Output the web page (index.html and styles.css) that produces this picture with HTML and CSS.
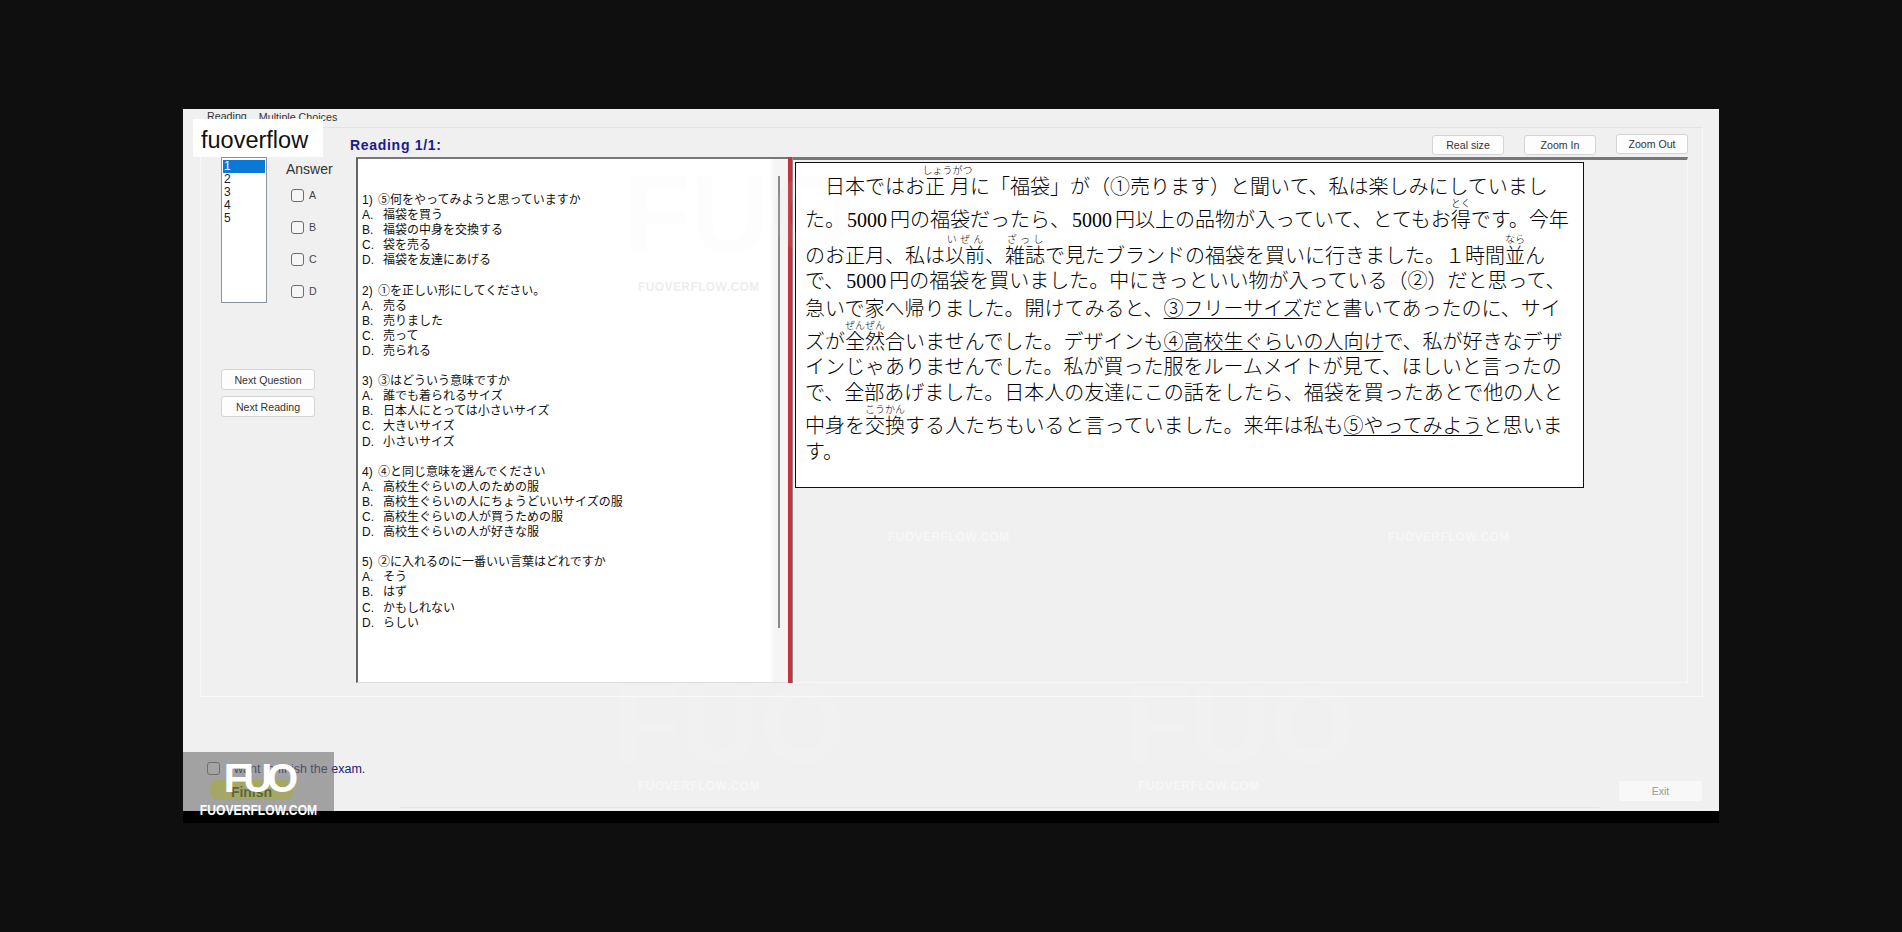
FILE: index.html
```html
<!DOCTYPE html>
<html lang="ja">
  <head>
    <meta charset="UTF-8" />
    <title>EOS Reading</title>
    <link rel="stylesheet" href="styles.css">
  </head>
  <body>
    <div class="stage">
      <div class="window">
        <!-- Tab strip -->
        <div class="tabs">
          <span class="tab">Reading</span>
          <span class="tab tab-low">Multiple Choices</span>
        </div>

        <div class="panel">
          <div class="toolbar">
            <div class="reading-title">Reading 1/1:</div>
            <div class="zoom-buttons">
              <button class="btn">Real size</button>
              <button class="btn">Zoom In</button>
              <button class="btn btn-raised">Zoom Out</button>
            </div>
          </div>

          <div class="content">
            <!-- Question list and answer boxes -->
            <div class="side">
              <div class="side-left">
                <ul class="question-list">
                  <li class="selected">1</li>
                  <li>2</li>
                  <li>3</li>
                  <li>4</li>
                  <li>5</li>
                </ul>
                <button class="btn btn-next">Next Question</button>
                <button class="btn btn-next">Next Reading</button>
              </div>
              <div class="answers">
                <div class="answers-title">Answer</div>
                <label class="answer"><input type="checkbox" />A</label>
                <label class="answer"><input type="checkbox" />B</label>
                <label class="answer"><input type="checkbox" />C</label>
                <label class="answer"><input type="checkbox" />D</label>
              </div>
            </div>

            <!-- Questions -->
            <div class="questions">
              <div class="q"><span class="num">1)</span>⑤何をやってみようと思っていますか</div>
              <div class="q"><span class="key">A.</span>福袋を買う</div>
              <div class="q"><span class="key">B.</span>福袋の中身を交換する</div>
              <div class="q"><span class="key">C.</span>袋を売る</div>
              <div class="q"><span class="key">D.</span>福袋を友達にあげる</div>
              <div class="q-gap"></div>
              <div class="q"><span class="num">2)</span>①を正しい形にしてください。</div>
              <div class="q"><span class="key">A.</span>売る</div>
              <div class="q"><span class="key">B.</span>売りました</div>
              <div class="q"><span class="key">C.</span>売って</div>
              <div class="q"><span class="key">D.</span>売られる</div>
              <div class="q-gap"></div>
              <div class="q"><span class="num">3)</span>③はどういう意味ですか</div>
              <div class="q"><span class="key">A.</span>誰でも着られるサイズ</div>
              <div class="q"><span class="key">B.</span>日本人にとっては小さいサイズ</div>
              <div class="q"><span class="key">C.</span>大きいサイズ</div>
              <div class="q"><span class="key">D.</span>小さいサイズ</div>
              <div class="q-gap"></div>
              <div class="q"><span class="num">4)</span>④と同じ意味を選んでください</div>
              <div class="q"><span class="key">A.</span>高校生ぐらいの人のための服</div>
              <div class="q"><span class="key">B.</span>高校生ぐらいの人にちょうどいいサイズの服</div>
              <div class="q"><span class="key">C.</span>高校生ぐらいの人が買うための服</div>
              <div class="q"><span class="key">D.</span>高校生ぐらいの人が好きな服</div>
              <div class="q-gap"></div>
              <div class="q"><span class="num">5)</span>②に入れるのに一番いい言葉はどれですか</div>
              <div class="q"><span class="key">A.</span>そう</div>
              <div class="q"><span class="key">B.</span>はず</div>
              <div class="q"><span class="key">C.</span>かもしれない</div>
              <div class="q"><span class="key">D.</span>らしい</div>
              <div class="scroll-line"></div>
            </div>

            <div class="splitter"></div>

            <!-- Reading passage -->
            <div class="reading-pane">
              <div class="passage">
                <div class="line">　日本ではお<ruby>正月<rt>しょうがつ</rt></ruby>に「福袋」が（①売ります）と聞いて、私は楽しみにしていまし</div>
                <div class="line">た。<span class="num-serif">5000</span>円の福袋だったら、<span class="num-serif">5000</span>円以上の品物が入っていて、とてもお<ruby>得<rt>とく</rt></ruby>です。今年</div>
                <div class="line">のお正月、私は<ruby>以前<rt>いぜん</rt></ruby>、<ruby>雑誌<rt>ざっし</rt></ruby>で見たブランドの福袋を買いに行きました。１時間<ruby>並<rt>なら</rt></ruby>ん</div>
                <div class="line">で、<span class="num-serif">5000</span>円の福袋を買いました。中にきっといい物が入っている（②）だと思って、</div>
                <div class="line">急いで家へ帰りました。開けてみると、<u>③フリーサイズ</u>だと書いてあったのに、サイ</div>
                <div class="line">ズが<ruby>全然<rt>ぜんぜん</rt></ruby>合いませんでした。デザインも<u>④高校生ぐらいの人向け</u>で、私が好きなデザ</div>
                <div class="line">インじゃありませんでした。私が買った服をルームメイトが見て、ほしいと言ったの</div>
                <div class="line">で、全部あげました。日本人の友達にこの話をしたら、福袋を買ったあとで他の人と</div>
                <div class="line">中身を<ruby>交換<rt>こうかん</rt></ruby>する人たちもいると言っていました。来年は私も<u>⑤やってみよう</u>と思いま</div>
                <div class="line">す。</div>
              </div>
            </div>
          </div>
        </div>

        <div class="footer">
          <div class="finish-area">
            <label class="finish-check"><input type="checkbox" />I want to finish the exam.</label>
            <button class="btn-finish">Finish</button>
          </div>
          <button class="btn-exit">Exit</button>
        </div>
        <div class="status-edge"></div>
      </div>
      <div class="foot"></div>

      <!-- Site stamps lying over the capture -->
      <div class="brand">fuoverflow</div>
      <div class="stamp">
        <div class="stamp-fuo">FUO</div>
        <div class="stamp-site">FUOVERFLOW.COM</div>
      </div>
      <div class="wm wm-1">FUOVERFLOW.COM</div>
      <div class="wm wm-2">FUOVERFLOW.COM</div>
      <div class="wm wm-3">FUOVERFLOW.COM</div>
      <div class="wm wm-4">FUOVERFLOW.COM</div>
      <div class="wm wm-5">FUOVERFLOW.COM</div>
      <div class="wm-logo wm-logo-1">FUO</div>
      <div class="wm-logo wm-logo-2">FUO</div>
      <div class="wm-logo wm-logo-3">FUO</div>
    </div>
  </body>
</html>
```

FILE: styles.css
```css
body {
  margin: 0;
  height: 932px;
  overflow: hidden;
  background-color: #0f0f0f;
  font-family: "Liberation Sans", "Noto Sans CJK JP", sans-serif;
  font-size: 12px;
  color: #222;
}

.stage {
  position: relative;
  width: 1536px;
  margin: 109px 0 0 183px;
}

.window {
  position: relative;
  display: flex;
  flex-direction: column;
  height: 702px;
  padding: 0 16px 0 17px;
  box-sizing: border-box;
  background-color: #f0f0f0;
  overflow: hidden;
}

.foot {
  height: 12px;
  background-color: #000;
}

/* Tabs */
.tabs {
  display: flex;
  gap: 12px;
  height: 18px;
  padding: 1px 0 0 7px;
  box-sizing: border-box;
}

.tab {
  font-size: 10.7px;
  line-height: 13px;
  color: #333;
}

.tab-low {
  padding-top: 1px;
}

/* Main panel */
.panel {
  height: 570px;
  border: 1px solid #f8f8f8;
  border-top-color: #e4e4e4;
  box-sizing: border-box;
  padding-right: 14px;
}

.toolbar {
  display: flex;
  justify-content: space-between;
  align-items: center;
  height: 29px;
  padding: 4px 0 0 149px;
  box-sizing: border-box;
}

.reading-title {
  font-size: 14px;
  font-weight: bold;
  letter-spacing: 0.7px;
  color: #1a1a8c;
}

.zoom-buttons {
  display: flex;
  gap: 20px;
}

.btn {
  width: 72px;
  height: 20px;
  padding: 0;
  border: 1px solid #d4d4d4;
  border-radius: 3px;
  background-color: #fdfdfd;
  font-family: inherit;
  font-size: 10.6px;
  color: #333;
}

.btn-raised {
  margin-top: -1px;
}

.content {
  display: flex;
  height: 526px;
}

/* Left column */
.side {
  display: flex;
  flex: none;
  width: 155px;
  padding-left: 20px;
  box-sizing: border-box;
}

.side-left {
  display: flex;
  flex-direction: column;
  align-items: flex-start;
  width: 94px;
}

.question-list {
  width: 46px;
  height: 146px;
  margin: 0 0 66px;
  padding: 2px 1px 1px;
  box-sizing: border-box;
  list-style: none;
  border: 1px solid #8a929e;
  background-color: #fff;
  font-size: 12px;
  line-height: 13px;
}

.question-list li {
  padding-left: 1px;
}

.selected {
  background-color: #0a78d7;
  color: #fff;
}

.btn-next {
  width: 94px;
  height: 21px;
  margin-bottom: 6px;
}

.answers {
  margin-left: -29px;
  padding-top: 4px;
}

.answers-title {
  height: 18px;
  font-size: 14px;
  line-height: 16px;
  color: #333;
}

.answer {
  display: flex;
  align-items: center;
  gap: 5px;
  height: 32px;
  padding-left: 5px;
  font-size: 10.6px;
  color: #444;
}

input[type="checkbox"] {
  appearance: none;
  flex: none;
  width: 13px;
  height: 13px;
  margin: 0;
  border: 1px solid #6d6d6d;
  border-radius: 3px;
  background-color: #f6f6f6;
}

/* Question text */
.questions {
  position: relative;
  flex: none;
  width: 432px;
  box-sizing: border-box;
  padding: 32px 0 0 4px;
  border-top: 2px solid #777;
  border-left: 2px solid #666;
  border-bottom: 1px solid #ddd;
  background: linear-gradient(to right, #fff 412px, #f5f5f5 416px);
  font-family: "Noto Sans CJK JP", sans-serif;
  font-size: 12px;
  line-height: 15px;
  color: #111;
}

.q,
.q-gap {
  height: 15.1px;
  white-space: nowrap;
}

.key {
  display: inline-block;
  width: 21px;
  font-family: "Liberation Sans", sans-serif;
  font-size: 12px;
}

.num {
  display: inline-block;
  width: 16px;
  font-family: "Liberation Sans", sans-serif;
  font-size: 12px;
}

.scroll-line {
  position: absolute;
  left: 420px;
  top: 17px;
  width: 2px;
  height: 452px;
  background-color: #8a8a8a;
}

.splitter {
  flex: none;
  width: 5px;
  height: 526px;
  background: linear-gradient(to right, #c8323c 0, #c8323c 4px, #8a8a8a 4px);
}

/* Passage */
.reading-pane {
  flex: 1;
  padding: 2px 0 0 2px;
  border-top: 3px solid #777;
  border-right: 1px solid #f8f8f8;
  border-bottom: 1px solid #f8f8f8;
}

.passage {
  width: 789px;
  height: 326px;
  box-sizing: border-box;
  padding: 2px 0 0 9px;
  border: 1px solid #111;
  background-color: #fff;
  font-family: "Noto Sans CJK JP", sans-serif;
  font-size: 20px;
  font-weight: 300;
  color: #000;
}

.line {
  line-height: 25.4px;
  white-space: nowrap;
}

.passage ruby {
  ruby-position: over;
}

.passage rt {
  font-size: 10px;
  line-height: 10px;
  color: #000;
}

.num-serif {
  font-family: "Liberation Serif", serif;
  font-size: 20px;
  font-weight: normal;
  padding: 0 3px 0 2px;
}

.passage u {
  text-decoration-thickness: 1px;
  text-underline-offset: 2px;
}

/* Bottom of the window */
.footer {
  display: flex;
  justify-content: space-between;
  align-items: flex-start;
  height: 114px;
  padding-top: 65px;
  box-sizing: border-box;
}

.finish-area {
  display: flex;
  flex-direction: column;
  align-items: flex-start;
  padding-left: 7px;
}

.finish-check {
  display: flex;
  align-items: center;
  gap: 7px;
  height: 13px;
  font-size: 12.5px;
  color: #1a1a70;
}

.btn-finish {
  width: 83px;
  height: 20px;
  margin: 5px 0 0 3px;
  padding: 4px 0 0;
  border: 0;
  border-radius: 8px;
  background-color: #f7ff55;
  font-family: inherit;
  font-size: 14px;
  font-weight: bold;
  color: #3c5500;
}

.btn-exit {
  width: 83px;
  height: 20px;
  margin: 19px 1px 0 0;
  padding: 0;
  border: 0;
  background-color: #f8f8f8;
  font-family: inherit;
  font-size: 10.6px;
  color: #999;
}

.status-edge {
  position: absolute;
  left: 217px;
  right: 120px;
  bottom: 3px;
  height: 1px;
  background-color: #e6e6e6;
}

/* Overlays */
.brand {
  position: absolute;
  left: 10px;
  top: 10px;
  width: 130px;
  height: 38px;
  box-sizing: border-box;
  padding-left: 8px;
  background-color: #fff;
  font-size: 23.5px;
  line-height: 42px;
  overflow: hidden;
  color: #111;
}

.stamp {
  position: absolute;
  left: 0;
  top: 643px;
  width: 151px;
  height: 59px;
  background-color: rgba(110, 110, 110, 0.6);
  color: #fff;
  text-align: center;
  font-weight: bold;
}

.stamp-fuo {
  margin-top: 9px;
  font-size: 40px;
  line-height: 34px;
  letter-spacing: -5px;
}

.stamp-site {
  margin-top: 8px;
  font-size: 15px;
  line-height: 14px;
  white-space: nowrap;
  transform: scaleX(0.81);
}

.wm {
  position: absolute;
  font-size: 12px;
  font-weight: bold;
  letter-spacing: 0.4px;
  color: rgba(255, 255, 255, 0.45);
}

.wm-1 { left: 455px; top: 171px; color: rgba(225, 225, 225, 0.6); }
.wm-2 { left: 705px; top: 421px; }
.wm-3 { left: 1205px; top: 421px; }
.wm-4 { left: 455px; top: 670px; }
.wm-5 { left: 955px; top: 670px; }

.wm-logo {
  position: absolute;
  font-size: 110px;
  font-weight: bold;
  line-height: 110px;
  color: rgba(255, 255, 255, 0.12);
}

.wm-logo-1 { left: 440px; top: 50px; color: rgba(235, 235, 235, 0.08); }
.wm-logo-2 { left: 430px; top: 560px; }
.wm-logo-3 { left: 940px; top: 560px; }
```
